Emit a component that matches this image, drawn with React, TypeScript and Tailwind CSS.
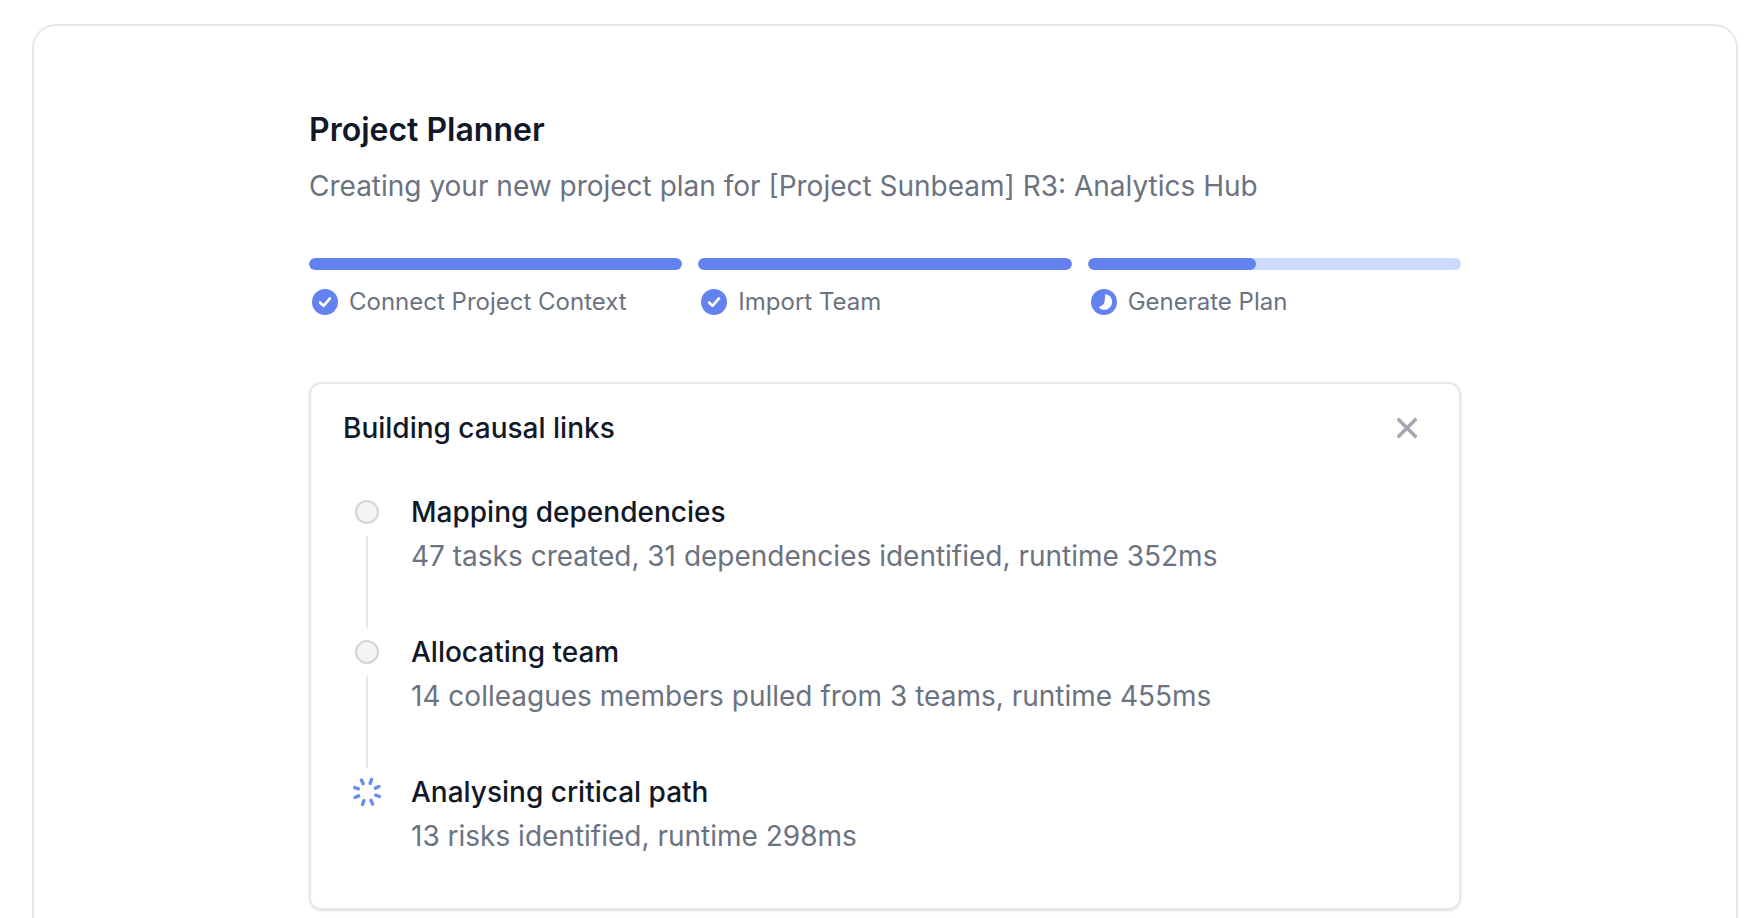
const steps = [
  { label: "Connect Project Context", state: "done" },
  { label: "Import Team", state: "done" },
  { label: "Generate Plan", state: "active" },
];

const tasks = [
  { title: "Mapping dependencies", detail: "47 tasks created, 31 dependencies identified, runtime 352ms", state: "done" },
  { title: "Allocating team", detail: "14 colleagues members pulled from 3 teams, runtime 455ms", state: "done" },
  { title: "Analysing critical path", detail: "13 risks identified, runtime 298ms", state: "running" },
];

const CheckIcon = () => (
  <svg viewBox="0 0 24 24" className="w-8 h-8 shrink-0">
    <circle cx="12" cy="12" r="9.75" fill="#6482ef" />
    <path d="M8.3 12.4l2.6 2.5 4.8-5.6" fill="none" stroke="#fff" strokeWidth="2" strokeLinecap="round" strokeLinejoin="round" />
  </svg>
);

const PartialIcon = () => (
  <svg viewBox="0 0 24 24" className="w-8 h-8 shrink-0">
    <circle cx="12" cy="12" r="9.75" fill="#6482ef" />
    <path d="M13 6.2c3 .3 5.3 2.9 5.1 6-.2 3.1-2.9 5.8-6 5.7-1.5 0-3.2-.6-3.7-1.5-.2-.5.2-.9.7-1.1 1.9-.6 3.1-1.9 3.3-3.6z" fill="#fff" />
  </svg>
);

const spokes = [-25, 20, 65, 110, 155, 200, 245, 290];

const Spinner = () => (
  <svg viewBox="0 0 30 30" className="w-[30px] h-[30px] shrink-0 -mt-[3px]" fill="none" stroke="#6b8cf5" strokeWidth="3.4" strokeLinecap="round">
    {spokes.map((angle) => (
      <path key={angle} d="M15 1.8V5.8" transform={`rotate(${angle} 15 15)`} />
    ))}
  </svg>
);

export default function App() {
  return (
    <div className="h-[918px] overflow-hidden bg-white pt-6 pl-8 pr-[25px] font-['Inter',sans-serif]">
      <div className="h-[1000px] rounded-3xl border-2 border-[#e5e7eb] flex justify-center pt-[86px]">
        <div className="w-[1152px]">
          <h1 className="text-[32px] leading-9 font-semibold text-[#111827]">Project Planner</h1>
          <p className="mt-5 text-[28px] leading-9 text-[#6b7280]">
            Creating your new project plan for [Project Sunbeam] R3: Analytics Hub
          </p>

          <div className="mt-[54px] grid grid-cols-3 gap-4">
            {steps.map((step) => (
              <div key={step.label}>
                <div className="h-3 rounded-full bg-[#cbdafc] overflow-hidden">
                  <div className={`h-full rounded-full bg-[#6482ef] ${step.state === "done" ? "w-full" : "w-[45%]"}`} />
                </div>
                <div className="mt-4 flex items-center gap-2 text-[24px] leading-8 text-[#6b7280]">
                  {step.state === "done" ? <CheckIcon /> : <PartialIcon />}
                  <span>{step.label}</span>
                </div>
              </div>
            ))}
          </div>

          <div className="mt-16 h-[528px] rounded-xl border-2 border-[#e5e7eb] shadow-sm pl-8 pr-[34px] pt-[26px]">
            <div className="flex items-center justify-between">
              <h2 className="text-[28px] leading-8 font-medium text-[#111827]">Building causal links</h2>
              <svg viewBox="0 0 24 24" className="w-9 h-9" fill="none" stroke="#a3a7b0" strokeWidth="2.4" strokeLinecap="round">
                <path d="M6.5 17.5L17.5 6.5M6.5 6.5l11 11" />
              </svg>
            </div>

            <div className="mt-[50px]">
              {tasks.map((task, i) => (
                <div key={task.title} className="flex gap-5 h-[140px]">
                  <div className="w-12 pt-1 flex flex-col items-center gap-3">
                    {task.state === "done" ? (
                      <div className="w-6 h-6 rounded-full bg-[#f3f4f6] border-2 border-[#d1d5db]" />
                    ) : (
                      <Spinner />
                    )}
                    {i < tasks.length - 1 && <div className="w-0.5 h-[92px] bg-[#e5e7eb]" />}
                  </div>
                  <div>
                    <h3 className="text-[28px] leading-8 font-medium text-[#111827]">{task.title}</h3>
                    <p className="mt-3 text-[28px] leading-8 text-[#6b7280]">{task.detail}</p>
                  </div>
                </div>
              ))}
            </div>
          </div>
        </div>
      </div>
    </div>
  );
}
